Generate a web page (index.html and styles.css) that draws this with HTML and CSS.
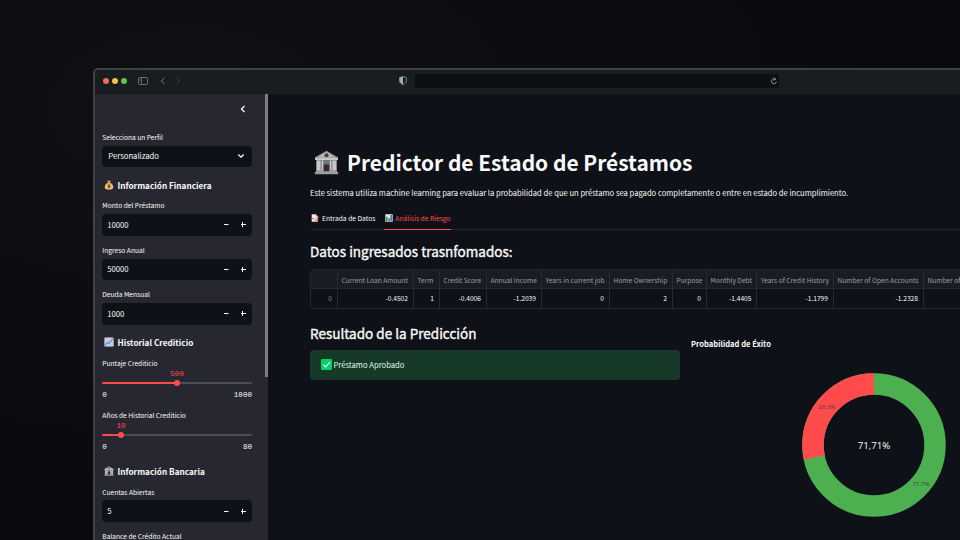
FILE: index.html
```
<!DOCTYPE html>
<html lang="es">
<head>
<meta charset="utf-8">
<title>Predictor de Estado de Préstamos</title>
<link rel="stylesheet" href="styles.css">
</head>
<body>
<svg class="defs" aria-hidden="true">
  <symbol id="bank" viewBox="0 0 24 24">
    <path fill="#8d8d8d" d="M12 .6 23 7v2H1V7z"/>
    <path fill="#b9b9b9" d="M12 1.6 20.5 7h-17z"/>
    <path fill="#777" d="M2 9h20v12H2z"/>
    <path fill="#c8c8c8" d="M1 7.5h22v2.2H1zM2.6 10h3.7v10H2.6zM17.7 10h3.7v10h-3.7zM7.3 10h1.5v10H7.3zM15.2 10h1.5v10h-1.5z"/>
    <path fill="#9e9e9e" d="M2 19.5h20v1.7H2zM.8 21.2h22.4v2H.8z"/>
    <path fill="#38273d" d="M9.4 13.8h5.2v6.6H9.4z"/>
    <circle cx="12" cy="5" r="2" fill="#44404c"/>
  </symbol>
  <symbol id="bag" viewBox="0 0 24 24">
    <path fill="#f3bd7a" d="m8 1 2.5 1.2L12 .8l1.5 1.4L16 1l-1.700 5c5 2.500 8 7 8 11.500 0 4-3.500 5.500-10.300 5.500S1.700 21.500 1.700 17.500C1.700 13 4.700 8.500 9.700 6z"/>
    <path fill="#9a6238" d="M8.500 5.500h7v2h-7z"/>
    <circle cx="12" cy="15" r="5" fill="#d0924f"/>
    <path fill="none" stroke="#6f4327" stroke-width="1.600" d="M14.500 12.800c-1-1.200-4.700-1.200-4.700.600 0 2 4.700 1 4.700 3.200 0 1.800-4 1.800-5 .500M12.200 10.500v9"/>
  </symbol>
  <symbol id="trend" viewBox="0 0 24 24">
    <rect x="1" y="1" width="22" height="22" rx="1.500" fill="#dcd3e6"/>
    <path stroke="#b5aabf" stroke-width=".8" d="M1 7h22M1 12h22M1 17h22M7 1v22M12 1v22M17 1v22"/>
    <path fill="none" stroke="#3d9be0" stroke-width="2.600" d="m2 20 6-7 4 2.500L22 3.500"/>
  </symbol>
  <symbol id="memo" viewBox="0 0 24 24">
    <path fill="#eee5f3" d="M2 1h12l6 6v16H2z"/>
    <path fill="#b8a9c4" d="M14 1v6h6z"/>
    <path fill="#f59a48" d="m19 11 3 3-8 8-5 1 2-5z"/>
    <path fill="#e9434e" d="m18 11 3-3 3 3-3 3zM3 12l7 1-1 2-6-1z"/>
  </symbol>
  <symbol id="bars" viewBox="0 0 24 24">
    <rect x="1" y="1" width="22" height="22" rx="1.500" fill="#efe7f5"/>
    <path fill="#18a957" d="M3 8h5v14H3z"/>
    <path fill="#e93a6a" d="M9.700 13h4.800v9H9.700z"/>
    <path fill="#178ae0" d="M16 3h5v19h-5z"/>
  </symbol>
</svg>

<div class="window">
  <header class="titlebar">
    <span class="dot red"></span><span class="dot yellow"></span><span class="dot green"></span>
    <svg class="panel-icon" viewBox="0 0 10 8"><rect x=".5" y=".5" width="9" height="7" rx="1" fill="none" stroke="#757a7c" stroke-width=".9"/><path d="M3.500.500v7M1.500 2.300h1M1.500 3.700h1" stroke="#757a7c" stroke-width=".8"/></svg>
    <svg class="nav-icon back" viewBox="0 0 6 8"><path d="M4.500 1 1.300 4l3.200 3"/></svg>
    <svg class="nav-icon forward" viewBox="0 0 6 8"><path d="M1.500 1l3.200 3-3.200 3"/></svg>
    <svg class="shield" viewBox="0 0 8 9"><path d="M4 .6 7.400 1.600v3.200C7.400 6.500 6 7.800 4 8.500 2 7.800.6 6.500.6 4.800V1.600z" fill="none" stroke="#92999b" stroke-width=".8"/><path d="M4 .6v7.900C2 7.800.6 6.500.6 4.800V1.600z" fill="#a5abad"/></svg>
    <div class="address"><svg viewBox="0 0 8 8"><path d="M5.900 2.600A2.500 2.500 0 1 0 6.500 4.700M3.700.500l1.700 1.600-1.700 1.400" fill="none" stroke="#a0a5a6" stroke-width=".9"/></svg></div>
  </header>

  <div class="app">
    <aside class="sidebar">
      <div class="collapse"><svg viewBox="0 0 6 8"><path d="M4.500 1 1.500 4l3 3"/></svg></div>
      <label class="label">Selecciona un Perfil</label>
      <div class="field select"><span>Personalizado</span><svg viewBox="0 0 8 6"><path d="m1.300 1.500 2.700 2.700 2.700-2.700"/></svg></div>

      <h3 class="group"><svg><use href="#bag"/></svg>Información Financiera</h3>
      <label class="label">Monto del Préstamo</label>
      <div class="field"><span>10000</span><i class="minus"></i><i class="plus"></i></div>
      <label class="label next">Ingreso Anual</label>
      <div class="field"><span>50000</span><i class="minus"></i><i class="plus"></i></div>
      <label class="label next">Deuda Mensual</label>
      <div class="field"><span>1000</span><i class="minus"></i><i class="plus"></i></div>

      <h3 class="group"><svg><use href="#trend"/></svg>Historial Crediticio</h3>
      <label class="label">Puntaje Crediticio</label>
      <div class="slider half"><div class="track"><span class="thumb"></span><span class="value">500</span></div><div class="range"><span>0</span><span>1000</span></div></div>
      <label class="label next">Años de Historial Crediticio</label>
      <div class="slider eighth"><div class="track"><span class="thumb"></span><span class="value">10</span></div><div class="range"><span>0</span><span>80</span></div></div>

      <h3 class="group"><svg><use href="#bank"/></svg>Información Bancaria</h3>
      <label class="label">Cuentas Abiertas</label>
      <div class="field"><span>5</span><i class="minus"></i><i class="plus"></i></div>
      <label class="label next">Balance de Crédito Actual</label>
      <div class="scrollbar"></div>
    </aside>

    <main class="main">
      <h1 class="title"><svg><use href="#bank"/></svg><span>Predictor de Estado de Préstamos</span></h1>
      <p class="intro">Este sistema utiliza machine learning para evaluar la probabilidad de que un préstamo sea pagado completamente o entre en estado de incumplimiento.</p>
      <nav class="tabs">
        <span class="tab"><svg><use href="#memo"/></svg>Entrada de Datos</span>
        <span class="tab active"><svg><use href="#bars"/></svg>Análisis de Riesgo</span>
      </nav>
      <h2 class="subtitle">Datos ingresados trasnfomados:</h2>
      <table class="data">
        <colgroup><col class="c0"><col class="c1"><col class="c2"><col class="c3"><col class="c4"><col class="c5"><col class="c6"><col class="c7"><col class="c8"><col class="c9"><col class="c10"><col class="c11"></colgroup>
        <thead><tr><th></th><th>Current Loan Amount</th><th>Term</th><th>Credit Score</th><th>Annual Income</th><th>Years in current job</th><th>Home Ownership</th><th>Purpose</th><th>Monthly Debt</th><th>Years of Credit History</th><th>Number of Open Accounts</th><th>Number of</th></tr></thead>
        <tbody><tr><td>0</td><td>-0.4502</td><td>1</td><td>-0.4006</td><td>-1.2039</td><td>0</td><td>2</td><td>0</td><td>-1.4405</td><td>-1.1799</td><td>-1.2328</td><td></td></tr></tbody>
      </table>
      <div class="results">
        <section class="prediction">
          <h2 class="subtitle">Resultado de la Predicción</h2>
          <div class="alert"><svg viewBox="0 0 11 11"><rect width="11" height="11" rx="1.300" fill="#00d26a"/><path d="m2.300 5.600 2.300 2.300 4.300-4.700" fill="none" stroke="#f4f4f4" stroke-width="1.200"/></svg><span>Préstamo Aprobado</span></div>
        </section>
        <section class="chart">
          <h4>Probabilidad de Éxito</h4>
          <svg class="donut" viewBox="0 0 144 144">
            <circle cx="72" cy="72" r="61" fill="none" stroke="#4caf50" stroke-width="21.500"/>
            <circle cx="72" cy="72" r="61" fill="none" stroke="#ff4b4b" stroke-width="21.500" pathLength="100" stroke-dasharray="28.290 71.710" stroke-dashoffset="-71.710" transform="rotate(-90 72 72)"/>
            <text class="total" x="72" y="76">71,71%</text>
            <text class="slice" x="24.700" y="36">28.3%</text>
            <text class="slice" x="119" y="113">71.7%</text>
          </svg>
        </section>
      </div>
    </main>
  </div>
</div>
</body>
</html>
```
FILE: styles.css
```
* { box-sizing: border-box; }
body {
  margin: 0;
  width: 960px;
  height: 540px;
  overflow: hidden;
  padding: 68px 0 0 93px;
  background: radial-gradient(ellipse at 20% 20%, #101115 0, #0b0b0f 55%, #07080b 100%);
  color: #fafafa;
  font-family: "Noto Sans CJK SC", "Open Sans", sans-serif;
  font-size: 7px;
}
h1, h2, h3, h4, p { margin: 0; }
svg { display: block; flex: none; }
.defs { position: absolute; width: 0; height: 0; }

.window {
  width: 867px;
  height: 472px;
  border: 2px solid #404143;
  border-width: 2px 0 0 2px;
  border-radius: 5px 0 0 0;
  overflow: hidden;
  background: #0e1117;
}
.titlebar { display: flex; align-items: center; height: 23.500px; padding: 0 0 2px 7.500px; background: #191d1f; }
.dot { width: 6px; height: 6px; margin-right: 3.200px; border-radius: 50%; flex: none; }
.red { background: #ed6a5e; }
.yellow { background: #f4bf4f; }
.green { background: #61c554; }
.panel-icon { width: 10px; height: 8px; margin-left: 8.200px; }
.nav-icon { width: 6px; height: 8px; fill: none; stroke: #7b8082; stroke-width: 1; }
.back { margin-left: 12px; }
.forward { margin-left: 9px; stroke: #3b3f41; }
.shield { width: 8px; height: 9px; margin-left: 218px; }
.address { display: flex; align-items: center; justify-content: flex-end; width: 364px; height: 14px; margin-left: 8px; padding-right: 1px; border-radius: 2px; background: #0b0f11; flex: none; }
.address svg { width: 8px; height: 8px; }

.app { display: flex; height: 446.500px; }
.sidebar { position: relative; width: 173px; padding: 0 16px 0 7.300px; background: #262730; flex: none; overflow: hidden; }
.scrollbar { position: absolute; top: 0; right: 0; width: 3.500px; height: 283.500px; background: #7b7b81; }
.collapse { display: flex; justify-content: flex-end; padding: 11.500px 6.500px 0 0; height: 37.500px; }
.collapse svg { width: 6px; height: 8px; fill: none; stroke: #fafafa; stroke-width: 1.300; }
.label { display: block; height: 12px; line-height: 12px; margin-bottom: 2.800px; font-size: 6.650px; white-space: nowrap; }
.label.next { margin-top: 8.300px; }
.field { display: flex; align-items: center; height: 21.400px; padding: 0 6.500px 0 5px; border-radius: 4px; background: #0e1117; font-size: 7.700px; line-height: 12px; }
.field span { flex: 1; }
.select { padding: 0 7px 0 6px; }
.select svg { width: 8px; height: 6px; fill: none; stroke: #fafafa; stroke-width: 1.300; }
.minus, .plus { width: 5px; height: 5px; margin-left: 12px; background: linear-gradient(#fafafa, #fafafa) center / 4.500px 1.200px no-repeat; }
.plus { background: linear-gradient(#fafafa, #fafafa) center / 5px 1.200px no-repeat, linear-gradient(#fafafa, #fafafa) center / 1.200px 5px no-repeat; }
.group { display: flex; align-items: center; gap: 3.200px; height: 14px; line-height: 14px; margin: 10.900px 0 7.300px; padding-left: 2px; font-size: 8.230px; font-weight: 700; white-space: nowrap; }
.group svg { width: 10px; height: 10px; }
.slider { height: 31.300px; margin-top: -2.700px; padding-top: 12.700px; }
.track { position: relative; height: 2px; border-radius: 1px; background: linear-gradient(90deg, #ff4b4b var(--at), #4b4c55 var(--at)); }
.half { --at: 50%; }
.eighth { --at: 12.500%; }
.thumb { position: absolute; left: var(--at); top: -2px; width: 6px; height: 6px; margin-left: -3px; border-radius: 50%; background: #ff4b4b; }
.value { position: absolute; left: var(--at); bottom: 4.500px; transform: translateX(-50%); color: #ff4b4b; font: 7.600px/9px "Liberation Mono", monospace; }
.range { display: flex; justify-content: space-between; margin-top: 6.500px; font: 7.600px/10px "Liberation Mono", monospace; }
.slider + .label.next { margin-top: 8.900px; }
.slider + .group { margin-top: 11.900px; }

.main { flex: 1; min-width: 0; padding: 53.500px 0 0 42px; overflow: hidden; }
.title { display: flex; align-items: center; gap: 8px; height: 30px; padding-left: 4px; line-height: 30px; font-size: 20.920px; white-space: nowrap; }
.title svg { width: 25px; height: 25px; }
.intro { height: 12px; line-height: 12px; margin-top: 9.500px; font-size: 7.610px; white-space: nowrap; }
.tabs { display: flex; gap: 8.500px; height: 20px; margin-top: 11px; border-bottom: 1px solid #262730; }
.tab { display: flex; align-items: center; gap: 3px; height: 20px; padding: 0 0 2.500px 1px; font-size: 6.700px; line-height: 12px; white-space: nowrap; }
.tab svg { width: 8px; height: 8px; }
.active { gap: 2.500px; color: #ff4b4b; border-bottom: 1px solid #ff4b4b; }
.subtitle { height: 20px; line-height: 20px; font-size: 13.530px; font-weight: 400; -webkit-text-stroke: .35px #fafafa; white-space: nowrap; }
.tabs + .subtitle { margin-top: 11px; }

.data { table-layout: fixed; width: 703px; height: 39px; margin-top: 8px; border: 1px solid #24262d; border-radius: 4px; border-spacing: 0; overflow: hidden; font-size: 6.650px; line-height: 10px; white-space: nowrap; }
.data th, .data td { height: 18.500px; padding: 0 4.500px 0 0; text-align: right; border-right: 1px solid #292b32; font-weight: 400; }
.data th { height: 19.500px; padding: 1.500px 0 0 4px; text-align: left; background: #1a1c24; color: #9b9da3; border-bottom: 1px solid #24262d; }
.data td:first-child { color: #85878d; }
.c0 { width: 26.500px; } .c1 { width: 76px; } .c2 { width: 26px; } .c3 { width: 47px; } .c4 { width: 55px; } .c5 { width: 68px; }
.c6 { width: 63px; } .c7 { width: 34px; } .c8 { width: 50.500px; } .c9 { width: 76.500px; } .c10 { width: 90px; } .c11 { width: 90px; }

.results { display: flex; gap: 11px; margin-top: 14.500px; }
.prediction { width: 370px; flex: none; }
.alert { display: flex; align-items: center; gap: 2px; height: 29.500px; margin-top: 7.200px; padding-left: 10.500px; border-radius: 4px; background: #173928; color: #dffde9; font-size: 7.650px; line-height: 12px; }
.alert svg { width: 11px; height: 11px; }
.chart { width: 264px; flex: none; padding-top: 14.500px; }
.chart h4 { height: 12px; line-height: 12px; font-size: 7.600px; white-space: nowrap; }
.donut { width: 144px; height: 144px; margin: 23px 0 0 110.500px; }
.donut text { text-anchor: middle; }
.total { fill: #fafafa; font: 9.700px "Open Sans", sans-serif; }
.slice { fill: #444; font: 6px "Open Sans", sans-serif; }
```
